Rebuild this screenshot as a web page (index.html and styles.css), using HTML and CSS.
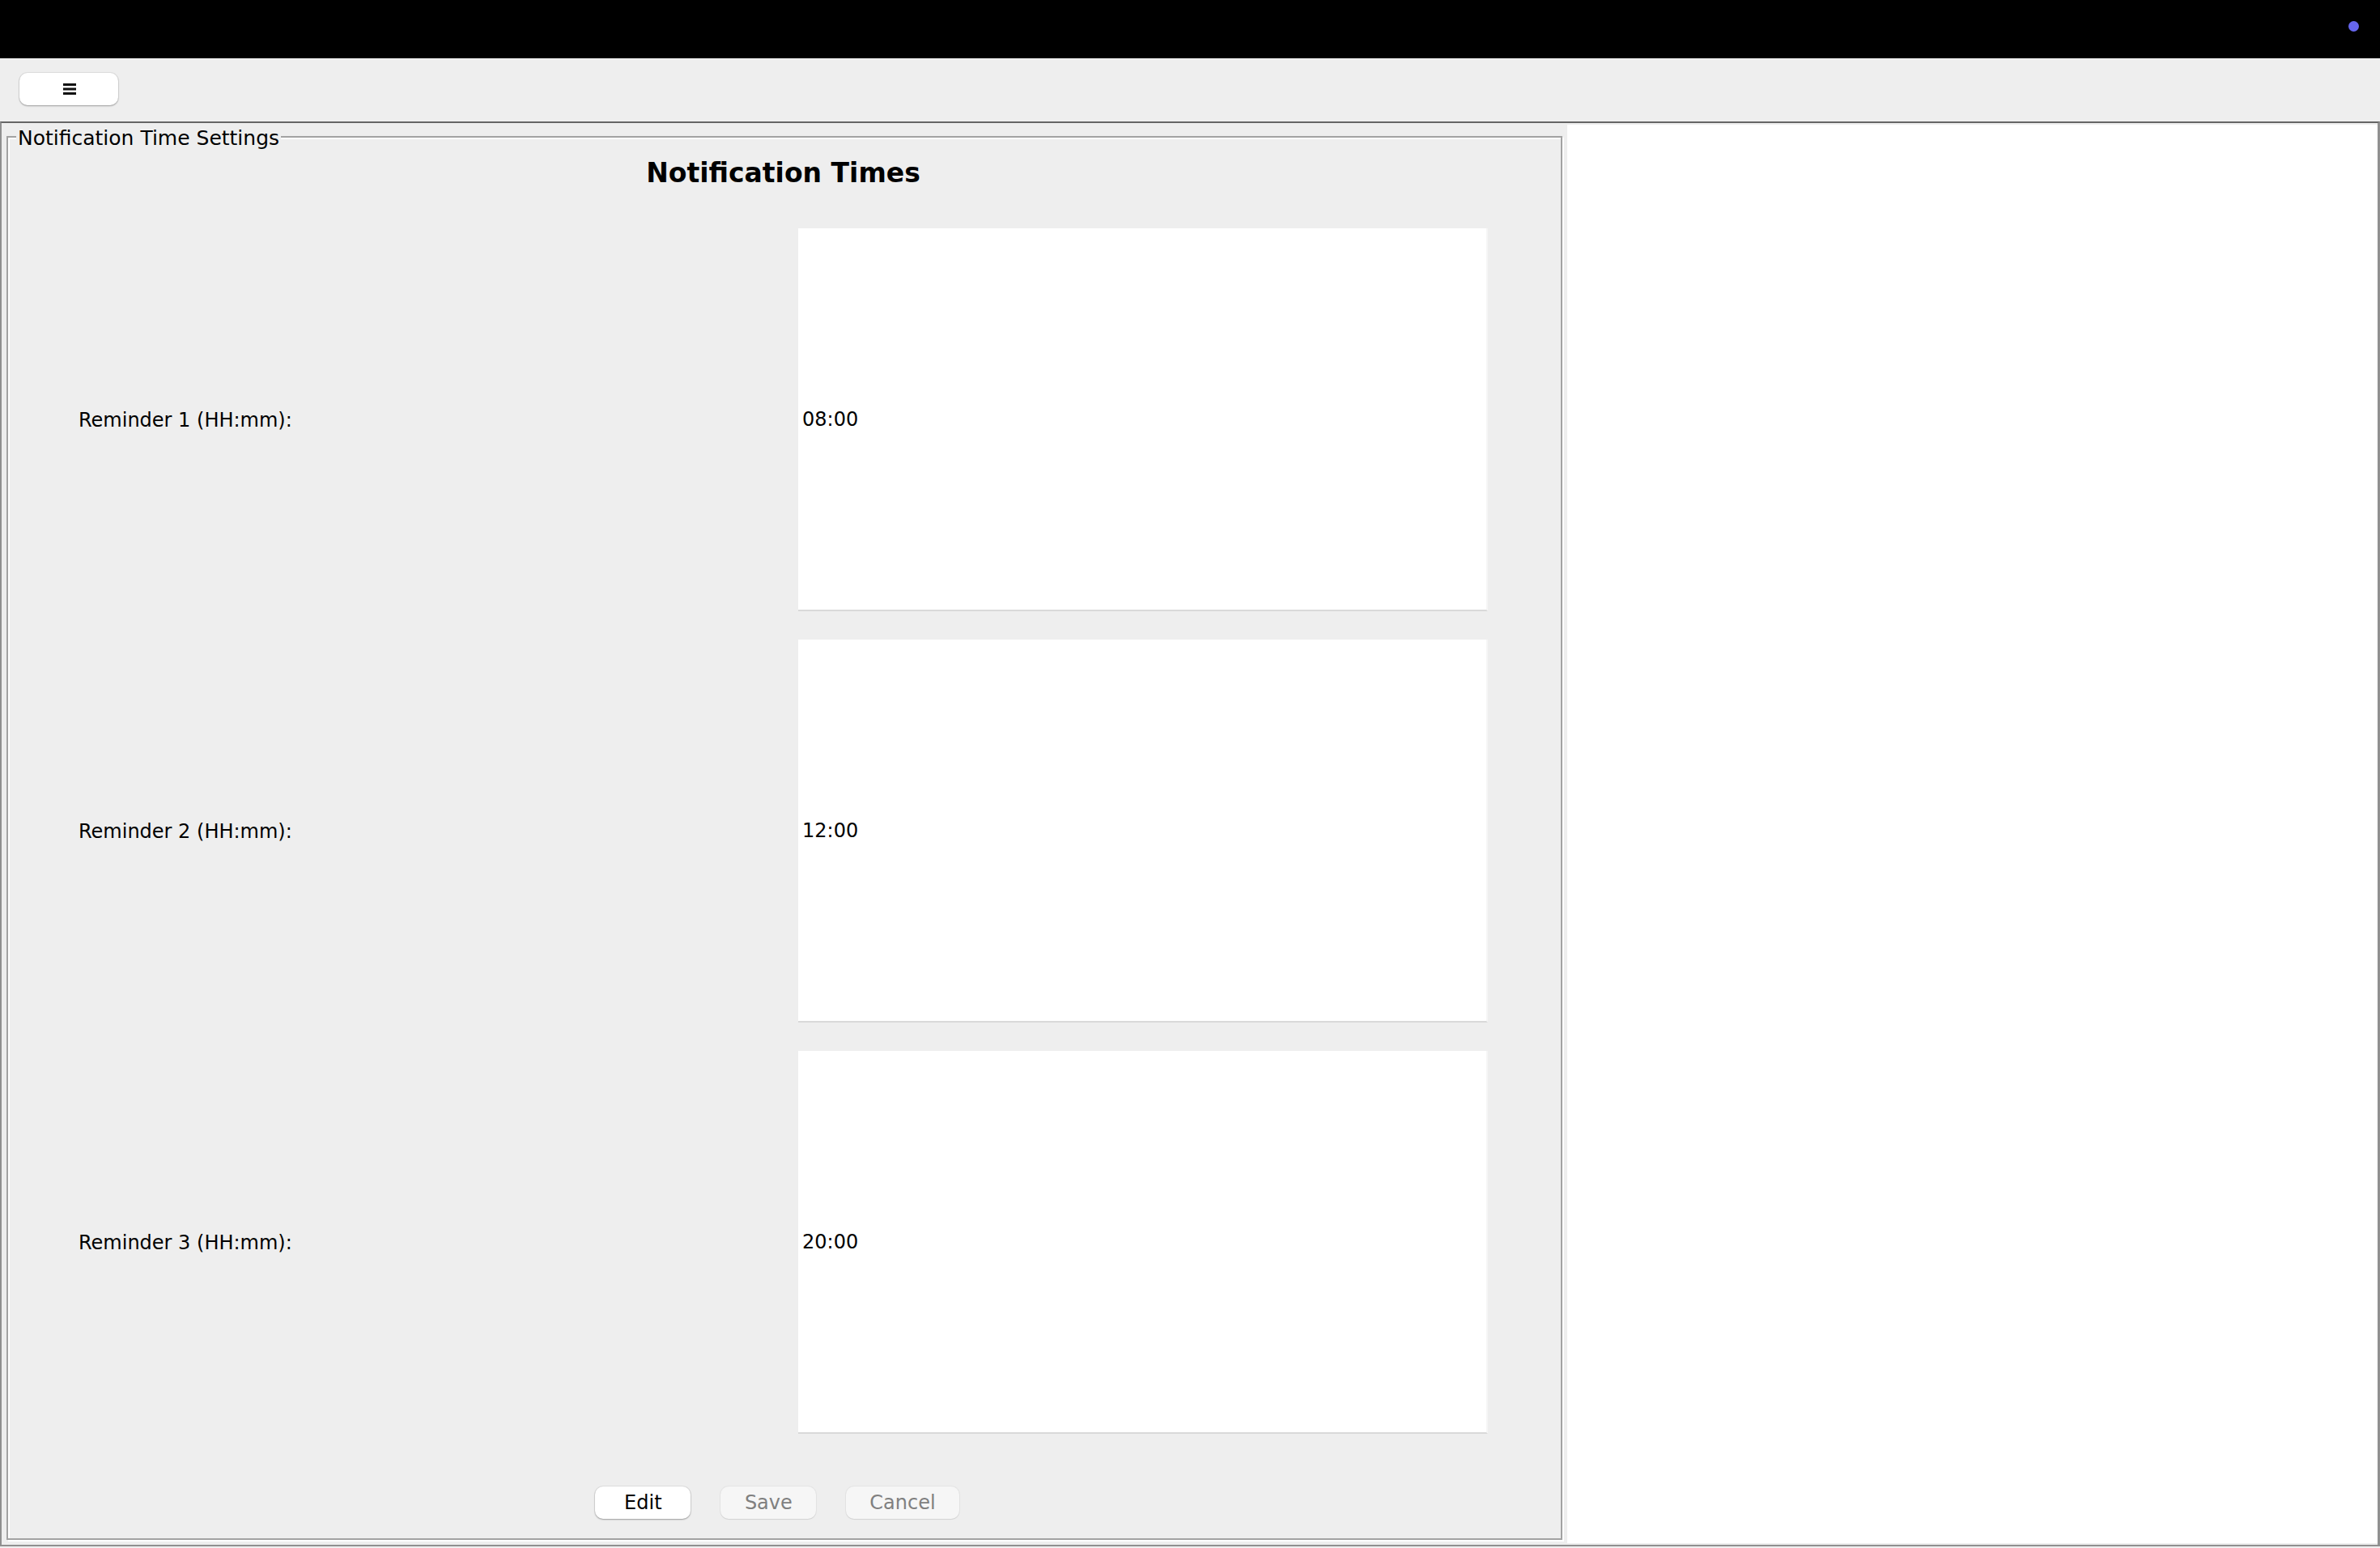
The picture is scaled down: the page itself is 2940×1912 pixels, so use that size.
FILE: index.html
```html
<!DOCTYPE html>
<html lang="en">
<head>
<meta charset="UTF-8">
<meta name="viewport" content="width=device-width, initial-scale=1.0">
<title>Notification Time Settings</title>
<link rel="stylesheet" href="styles.css">
</head>
<body>

<div class="topbar">
    <span class="status-dot"></span>
</div>

<div class="toolbar">
    <button class="menu-btn" type="button" aria-label="Menu">
        <svg width="16" height="14" viewBox="0 0 16 14">
            <rect x="0" y="0" width="16" height="3" fill="#111"/>
            <rect x="0" y="5.5" width="16" height="3" fill="#111"/>
            <rect x="0" y="11" width="16" height="3" fill="#111"/>
        </svg>
    </button>
</div>

<div class="main">
    <div class="settings-panel">
        <fieldset class="settings-group">
            <legend>Notification Time Settings</legend>
            <div class="group-body">
                <h1 class="group-title">Notification Times</h1>

                <div class="time-grid">
                    <label class="time-label">Reminder 1 (HH:mm):</label>
                    <div class="time-field">08:00</div>

                    <label class="time-label">Reminder 2 (HH:mm):</label>
                    <div class="time-field">12:00</div>

                    <label class="time-label">Reminder 3 (HH:mm):</label>
                    <div class="time-field">20:00</div>
                </div>

                <div class="actions">
                    <button class="btn" type="button">Edit</button>
                    <button class="btn" type="button" disabled>Save</button>
                    <button class="btn" type="button" disabled>Cancel</button>
                </div>
            </div>
        </fieldset>
    </div>
    <div class="side-panel"></div>
</div>

</body>
</html>
```

FILE: styles.css
```css
* {
    box-sizing: border-box;
}
html, body {
    height: 100%;
}
body {
    margin: 0;
    display: flex;
    flex-direction: column;
    background-color: #eeeeee;
    color: #000;
    font-family: 'DejaVu Sans', Verdana, sans-serif;
    font-size: 24px;
}

/* top black strip */
.topbar {
    height: 72px;
    flex: none;
    display: flex;
    justify-content: flex-end;
    align-items: flex-start;
    padding: 26px 26px 0 0;
    background-color: #000;
}
.status-dot {
    width: 13px;
    height: 13px;
    border-radius: 50%;
    background-color: #6666ee;
}

.toolbar {
    height: 78px;
    flex: none;
    padding: 18px 0 0 24px;
}
.menu-btn {
    width: 122px;
    height: 40px;
    display: flex;
    align-items: center;
    justify-content: center;
    padding: 0 0 0 2px;
    border: none;
    border-radius: 10px;
    background-color: #fff;
    box-shadow: 0 0 0 1px rgba(0, 0, 0, 0.06), 0 1px 2px rgba(0, 0, 0, 0.3);
}

.main {
    flex: 1;
    display: flex;
    margin-bottom: 2px;
    border: 2px solid #909090;
    border-top-color: #666;
    border-right-width: 3px;
}
.settings-panel {
    width: 1934px;
    flex: none;
    display: flex;
    flex-direction: column;
}
.side-panel {
    flex: 1;
    margin: 2px 0;
    background-color: #fff;
}

/* etched titled border */
.settings-group {
    flex: 1;
    margin: 0 6px 6px 6px;
    padding: 0;
    min-width: 0;
    border: 2px solid #a2a2a2;
    box-shadow: inset 2px 2px 0 #fff, 2px 2px 0 #fff;
}
.settings-group legend {
    margin-left: 10px;
    padding: 5px 2px 0;
    line-height: 28px;
    font-size: 25px;
    background-color: #eeeeee;
}

.group-body {
    padding: 0 90px 0 87px;
}
.group-title {
    margin: 9px 0 48px;
    font-size: 33px;
    line-height: 40px;
    font-weight: bold;
    text-align: center;
}

.time-grid {
    display: grid;
    grid-template-columns: 889px 852px;
    grid-auto-rows: 473px;
    row-gap: 35px;
}
.time-label {
    align-self: center;
}
.time-field {
    display: flex;
    align-items: center;
    padding-left: 5px;
    background-color: #fff;
    border-right: 2px solid #f5f5f5;
    border-bottom: 2px solid #d9d9d9;
}

.actions {
    display: flex;
    justify-content: center;
    gap: 37px;
    margin-top: 65px;
    padding-right: 15px;
}
.btn {
    min-width: 118px;
    height: 40px;
    padding: 0 29px;
    border: none;
    border-radius: 10px;
    background-color: #fff;
    color: #000;
    font-family: 'DejaVu Sans', Verdana, sans-serif;
    font-size: 24px;
    box-shadow: 0 0 0 1px rgba(0, 0, 0, 0.06), 0 1px 2px rgba(0, 0, 0, 0.3);
}
.btn:disabled {
    background-color: #f6f6f6;
    color: #808080;
    box-shadow: 0 0 0 1px rgba(0, 0, 0, 0.04), 0 1px 1px rgba(0, 0, 0, 0.08);
}
```
